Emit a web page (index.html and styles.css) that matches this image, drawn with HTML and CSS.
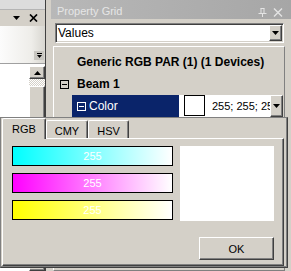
FILE: index.html
```html
<!DOCTYPE html>
<html lang="en">
<head>
    <meta charset="UTF-8">
    <title>Property Grid</title>
    <link rel="stylesheet" href="styles.css">
</head>
<body>
    <div class="workspace">
        <div class="side-panel">
            <div class="side-top"></div>
            <div class="side-header">
                <svg width="7" height="4" viewBox="0 0 7 4"><path d="M0 0h7L3.5 4z" fill="#000"/></svg>
                <svg width="9" height="8" viewBox="0 0 9 8"><path d="M1 0.5L8 7.5M8 0.5L1 7.5" stroke="#000" stroke-width="1.7"/></svg>
            </div>
            <div class="side-strip">
                <span class="overflow-btn">
                    <svg width="7" height="7" viewBox="0 0 7 7"><path d="M1 1.5h5" stroke="#000"/><path d="M1 3h5L3.5 6z" fill="#000"/></svg>
                </span>
            </div>
            <div class="side-list">
                <div class="list-area"></div>
                <div class="scrollbar">
                    <div class="btn3d scroll-btn">
                        <svg width="7" height="4" viewBox="0 0 7 4"><path d="M0 4h7L3.5 0z" fill="#000"/></svg>
                    </div>
                    <div class="scroll-track"></div>
                    <div class="btn3d scroll-thumb"></div>
                </div>
            </div>
        </div>
        <div class="splitter"></div>
        <div class="grid-panel">
            <div class="title-bar">
                <span class="title">Property Grid</span>
                <div class="title-icons">
                    <svg width="9" height="9" viewBox="0 0 9 9"><path d="M2.5 0.5h4M3 0.5v5M6 0.5v5M0.5 5.5h8M4.5 5.5v3.5" stroke="#e4e4e4" fill="none"/></svg>
                    <svg width="10" height="9" viewBox="0 0 10 9"><path d="M1 0.5L9 8.5M9 0.5L1 8.5" stroke="#e4e4e4" stroke-width="1.4"/></svg>
                </div>
            </div>
            <div class="combo">
                <span class="combo-text">Values</span>
                <span class="btn3d combo-btn">
                    <svg width="7" height="4" viewBox="0 0 7 4"><path d="M0 0h7L3.5 4z" fill="#000"/></svg>
                </span>
            </div>
            <div class="grid">
                <div class="grid-row device">Generic RGB PAR (1) (1 Devices)</div>
                <div class="grid-row category"><span class="expander"></span>Beam 1</div>
                <div class="grid-row prop">
                    <div class="prop-name"><span class="expander light"></span>Color</div>
                    <div class="prop-value">
                        <span class="swatch"></span>
                        <span class="value-text">255; 255; 255</span>
                    </div>
                    <span class="btn3d prop-btn">
                        <svg width="7" height="4" viewBox="0 0 7 4"><path d="M0 0h7L3.5 4z" fill="#000"/></svg>
                    </span>
                </div>
            </div>
        </div>
    </div>

    <div class="color-dialog">
        <div class="tabs">
            <div class="tab active tab-rgb">RGB</div>
            <div class="tab tab-cmy">CMY</div>
            <div class="tab tab-hsv">HSV</div>
        </div>
        <div class="tab-page">
            <div class="channels">
                <div class="channel cyan">255</div>
                <div class="channel magenta">255</div>
                <div class="channel yellow">255</div>
            </div>
            <div class="result">
                <div class="preview"></div>
                <div class="btn3d ok-btn">OK</div>
            </div>
        </div>
    </div>
</body>
</html>
```

FILE: styles.css
```css
* {
    box-sizing: border-box;
}
body {
    margin: 0;
    width: 291px;
    height: 271px;
    overflow: hidden;
    position: relative;
    background-color: #d4d0c8;
    font-family: "Liberation Sans", Arial, sans-serif;
    font-size: 12px;
    color: #000;
}
svg {
    display: block;
}
.btn3d {
    background-color: #d4d0c8;
    border: 1px solid;
    border-color: #fff #404040 #404040 #fff;
    box-shadow: inset -1px -1px #808080;
    display: flex;
    align-items: center;
    justify-content: center;
}
.workspace {
    display: flex;
    height: 271px;
}

/* left docked panel */
.side-panel {
    width: 46px;
    border-right: 1px solid #404040;
    display: flex;
    flex-direction: column;
}
.side-top {
    height: 10px;
    background-color: #dcdcdc;
    border-bottom: 1px solid #b4b4b4;
}
.side-header {
    height: 16px;
    display: flex;
    align-items: center;
    gap: 9px;
    padding-left: 13px;
}
.side-strip {
    height: 38px;
    background: linear-gradient(to right, #fcfcfc, #eeede9 70%, #d8d6d0);
    border-bottom: 1px solid #a0a0a0;
    display: flex;
    align-items: flex-end;
    justify-content: flex-end;
    padding: 0 1px 3px 0;
}
.overflow-btn {
    width: 10px;
    height: 9px;
    background-color: #c8c6c0;
    display: flex;
    align-items: center;
    justify-content: center;
}
.side-list {
    flex: 1;
    display: flex;
}
.list-area {
    flex: 1;
    background-color: #fff;
}
.scrollbar {
    width: 16px;
    display: flex;
    flex-direction: column;
    background-color: #fff;
    padding-top: 2px;
}
.scroll-btn {
    height: 13px;
}
.scroll-track {
    height: 7px;
    background: repeating-conic-gradient(#d4d0c8 0 25%, #fff 0 50%) 0 0 / 2px 2px;
}
.scroll-thumb {
    flex: 1;
}
.splitter {
    width: 5px;
}

/* property grid */
.grid-panel {
    flex: 1;
    display: flex;
    flex-direction: column;
}
.title-bar {
    height: 19px;
    display: flex;
    align-items: flex-start;
    padding: 4px 8px 0 6px;
    background: linear-gradient(to right, #b8b8b8, #a6a6a6);
    color: #e6e6e6;
    font-size: 11px;
    line-height: 14px;
}
.title {
    flex: 1;
}
.title-icons {
    display: flex;
    gap: 6px;
    margin-top: 4px;
}
.combo {
    height: 20px;
    margin: 4px 7px 0 4px;
    background-color: #fff;
    border: 1px solid;
    border-color: #808080 #fff #fff #808080;
    box-shadow: inset 1px 1px #404040, inset -1px -1px #d4d0c8;
    display: flex;
    align-items: center;
}
.combo-text {
    flex: 1;
    padding-left: 2px;
}
.combo-btn {
    width: 13px;
    height: 16px;
    margin-right: 1px;
}
.grid {
    flex: 1;
    margin: 3px 6px 0 2px;
    padding-top: 4px;
    border: 1px solid;
    border-color: #fff #808080 #808080 #fff;
}
.grid-row {
    height: 22px;
    line-height: 22px;
    white-space: nowrap;
}
.device {
    padding-left: 23px;
    font-weight: bold;
}
.category {
    display: flex;
    align-items: center;
    padding-left: 6px;
    font-weight: bold;
}
.expander {
    width: 9px;
    height: 9px;
    border: 1px solid #000;
    margin-right: 8px;
    position: relative;
}
.expander::after {
    content: "";
    position: absolute;
    left: 1px;
    top: 3px;
    width: 5px;
    height: 1px;
    background-color: #000;
}
.expander.light {
    border-color: #fff;
    margin-right: 3px;
}
.expander.light::after {
    background-color: #fff;
}
.prop {
    display: flex;
    padding-left: 18px;
}
.prop-name {
    width: 107px;
    display: flex;
    align-items: center;
    padding-left: 5px;
    background-color: #0a246a;
    color: #fff;
}
.prop-value {
    width: 91px;
    display: flex;
    align-items: center;
    padding-left: 5px;
    background-color: #fff;
    overflow: hidden;
}
.swatch {
    flex-shrink: 0;
    align-self: flex-start;
    width: 21px;
    height: 21px;
    border: 1px solid #000;
    background-color: #fff;
}
.value-text {
    margin-left: 7px;
    font-size: 11px;
    white-space: nowrap;
}
.prop-btn {
    width: 13px;
    height: 22px;
}

/* color picker drop-down */
.color-dialog {
    position: absolute;
    left: 0;
    top: 117px;
    width: 288px;
    height: 151px;
    padding-left: 1px;
    background-color: #d4d0c8;
    border: 1px solid;
    border-color: #808080 #404040 #404040 #808080;
    box-shadow: inset -1px -1px #808080;
    font-size: 11px;
}
.tabs {
    height: 20px;
    display: flex;
    align-items: flex-end;
}
.tab {
    height: 18px;
    padding-top: 4px;
    line-height: 13px;
    text-align: center;
    border: 1px solid;
    border-bottom: none;
    border-color: #fff #404040 #fff #fff;
    box-shadow: inset -1px 0 #808080;
    border-radius: 2px 2px 0 0;
}
.tab.active {
    height: 21px;
    margin-bottom: -1px;
    position: relative;
    z-index: 1;
    background-color: #d4d0c8;
}
.tab-rgb {
    width: 44px;
}
.tab-cmy {
    width: 42px;
}
.tab-hsv {
    width: 41px;
}
.tab-page {
    width: 282px;
    height: 128px;
    display: flex;
    padding: 7px 0 0 9px;
    border: 1px solid;
    border-color: #fff #404040 #404040 #fff;
    box-shadow: inset -1px -1px #808080;
}
.channels {
    width: 161px;
    display: flex;
    flex-direction: column;
    gap: 7px;
}
.channel {
    height: 20px;
    line-height: 18px;
    text-align: center;
    color: #fff;
    border: 1px solid #000;
}
.cyan {
    background: linear-gradient(to right, #00ffff, #fff);
}
.magenta {
    background: linear-gradient(to right, #ff00ff, #fff);
}
.yellow {
    background: linear-gradient(to right, #ffff00, #fff);
}
.result {
    margin-left: 7px;
    width: 94px;
    display: flex;
    flex-direction: column;
    align-items: flex-end;
}
.preview {
    width: 94px;
    height: 75px;
    background-color: #fff;
}
.ok-btn {
    margin-top: 16px;
    width: 75px;
    height: 23px;
}
```
